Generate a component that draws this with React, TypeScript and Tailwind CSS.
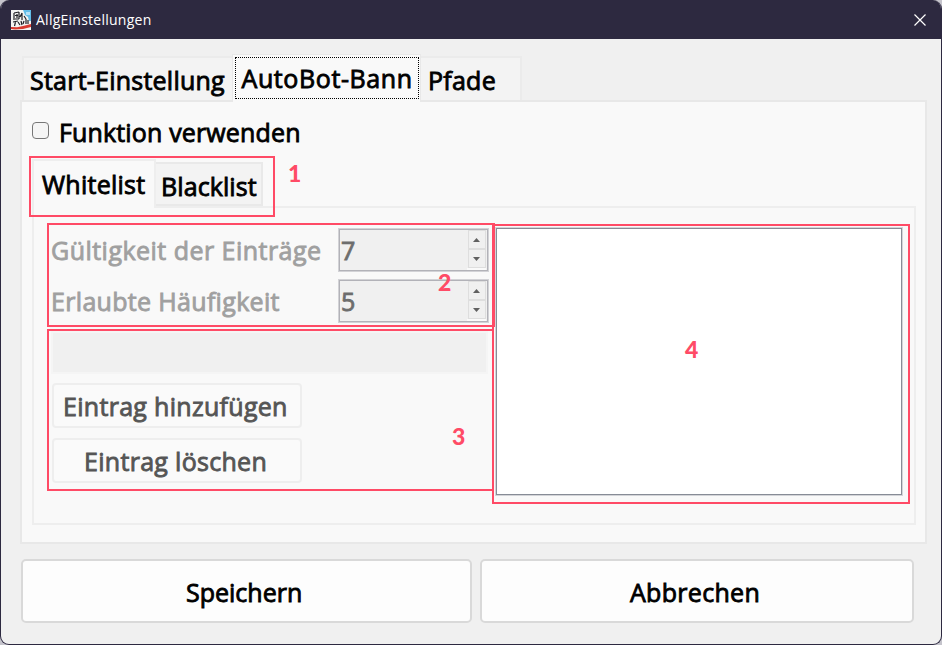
import React from "react";

type LabelProps = { children: React.ReactNode; className?: string };

function Label({ children, className = "" }: LabelProps) {
  return (
    <span className={`block h-9 shrink-0 whitespace-nowrap text-[25px] leading-9 [-webkit-text-stroke:0.85px_currentColor] ${className}`}>
      {children}
    </span>
  );
}

function AppIcon() {
  return (
    <svg width="20" height="20" viewBox="0 0 20 20" className="ml-[11px] shrink-0">
      <rect width="20" height="20" fill="#f4f4f2" />
      <path d="M12 0h8v11h-2l-1-4-3-2z" fill="#62bde8" />
      <path d="M15 2h4v3h-4z" fill="#b4e1f6" />
      <path d="M3 3l5-1M3 3v7M4 5.500h3M4 9h4M8 2v7M6 4v4M11 3l-2 4M11 3v7M13 6l2 3M2 12l5-1M4.500 12l-1 4M7 12l2 3M10 11l1 4M13 11l-1 3M15 9v5M17 10v4" fill="none" stroke="#202026" strokeWidth="1.2" />
      <path d="M0 17l6 .2L12 16l8-2v3l-8 2-8 .5-4-.5z" fill="#d83a30" />
    </svg>
  );
}

function Arrow({ up = false }: { up?: boolean }) {
  return (
    <div className="flex h-[19px] w-[18px] items-center justify-center border border-[#dedede] bg-[#f0f0f0]">
      <svg width="7" height="4" viewBox="0 0 7 4">
        <path d={up ? "M0 4L3.5 0L7 4z" : "M0 0h7L3.5 4z"} fill="#606060" />
      </svg>
    </div>
  );
}

function SpinBox({ value }: { value: string }) {
  return (
    <div className="flex h-[44px] w-[151px] border border-[#d2d2d6] bg-[#f0f0f0]">
      <div className="flex grow border border-[#b2b2b8]">
        <Label className="mt-[2px] ml-[1px] grow text-[#6d6d6d]">{value}</Label>
        <div className="mr-px flex h-[40px] w-[19px] flex-col items-center border-b-2 border-[#fafafa]">
          <Arrow up />
          <Arrow />
        </div>
      </div>
    </div>
  );
}

export default function App() {
  return (
    <div className="h-[645px] w-[942px] overflow-hidden bg-[#c5c4cc] font-['Open_Sans','Noto_Sans',sans-serif] text-black">
      <div className="relative flex h-full flex-col overflow-hidden rounded-[9px] border border-t-0 border-[#2d2940] bg-[#f0f0f0]">
        <header className="-mx-px flex h-[39px] shrink-0 items-center bg-[#2d2940] text-white">
          <AppIcon />
          <span className="ml-[5px] whitespace-nowrap text-[14px] leading-5 tracking-[0.25px]">AllgEinstellungen</span>
          <svg width="12" height="12" viewBox="0 0 12 12" className="mr-[16px] ml-auto">
            <path d="M0.5 0.5l11 11M11.5 0.5l-11 11" stroke="white" strokeWidth="1.2" />
          </svg>
        </header>

        <nav className="ml-[21px] flex h-[61px] shrink-0 items-end">
          <div className="flex h-[44px] w-[210px] border-2 border-r-0 border-b-0 border-[#ebebeb] bg-[#f3f3f3]">
            <Label className="mt-[4px] ml-[6px] tracking-[0.23px]">Start-Einstellung</Label>
          </div>
          <div className="z-10 -mb-[2px] flex h-[48px] w-[189px] justify-center border border-b-0 border-[#e8e8e8] bg-[#f9f9f9] pt-[2px]">
            <div className="h-[42px] w-[184px] border border-dotted border-black">
              <Label className="mt-[2px] ml-[6px] tracking-[0.6px]">AutoBot-Bann</Label>
            </div>
          </div>
          <div className="flex h-[44px] w-[101px] border-2 border-b-0 border-l-0 border-[#ebebeb] bg-[#f3f3f3]">
            <Label className="mt-[4px] ml-[7px] tracking-[0.25px]">Pfade</Label>
          </div>
        </nav>

        <main className="ml-[19px] h-[444px] w-[907px] shrink-0 border-2 border-[#e8e8e8] bg-[#f9f9f9] pl-[10px]">
          <div className="flex h-[57px] items-center">
            <span className="h-[17px] w-[17px] rounded-[4px] border border-[#777] bg-[#f5f5f5]" />
            <Label className="mt-[2px] ml-[10px] tracking-[0.15px]">Funktion verwenden</Label>
          </div>
          <div className="flex h-[47px] items-end">
            <div className="z-10 -mb-[2px] h-[49px] w-[124px] border-2 border-b-0 border-[#eeeeee] bg-[#f9f9f9]">
              <Label className="mt-[5px] ml-[8px] tracking-[0.25px]">Whitelist</Label>
            </div>
            <div className="h-[44px] w-[107px] border-2 border-l-0 border-[#e9e9e9] bg-[#f3f3f3]">
              <Label className="mt-[4px] ml-[5px] tracking-[0.1px]">Blacklist</Label>
            </div>
          </div>

          <section className="flex h-[319px] w-[884px] border-2 border-[#eeeeee] bg-[#f9f9f9]">
            <div className="ml-[17px] w-[444px] shrink-0 pt-[20px]">
              <div className="flex h-[44px]">
                <Label className="mt-[4px] w-[287px] tracking-[0.47px] text-[#a0a0a0]">Gültigkeit der Einträge</Label>
                <SpinBox value="7" />
              </div>
              <div className="mt-[7px] flex h-[44px]">
                <Label className="mt-[4px] w-[287px] tracking-[0.32px] text-[#a0a0a0]">Erlaubte Häufigkeit</Label>
                <SpinBox value="5" />
              </div>
              <div className="mt-[8px] h-[43px] w-[437px] border-2 border-[#f5f5f5] bg-[#f0f0f0]" />
              <div className="mt-[9px] ml-px flex h-[45px] w-[250px] rounded-[4px] border-2 border-[#eeeeee] bg-[#fafafa] pt-[3px] pl-[9px] text-[#555]">
                <Label className="tracking-[0.3px]">Eintrag hinzufügen</Label>
              </div>
              <div className="mt-[10px] ml-px flex h-[45px] w-[250px] rounded-[4px] border-2 border-[#eeeeee] bg-[#fafafa] pt-[3px] pl-[30px] text-[#555]">
                <Label className="tracking-[0.3px]">Eintrag löschen</Label>
              </div>
            </div>
            <div className="mt-[19px] h-[269px] w-[408px] shrink-0 border border-[#d3d4d8] bg-white">
              <div className="h-full border border-[#878c96]" />
            </div>
          </section>
        </main>

        <footer className="mt-[15px] ml-[20px] flex gap-[8px]">
          <button className="flex h-[64px] w-[451px] rounded-[5px] border-2 border-[#d9d9d9] bg-[#fdfdfd] pt-[13px] pl-[163px]">
            <Label>Speichern</Label>
          </button>
          <button className="flex h-[64px] w-[434px] rounded-[5px] border-2 border-[#d9d9d9] bg-[#fdfdfd] pt-[13px] pl-[148px]">
            <Label className="tracking-[0.3px]">Abbrechen</Label>
          </button>
        </footer>

        <div className="pointer-events-none absolute inset-0 z-20 font-[Lato] text-[23px] leading-[30px] font-black text-[#ff4b66]">
          <div className="absolute top-[156px] left-[28px] h-[61px] w-[246px] border-2 border-[#ff4b66]" />
          <div className="absolute top-[223px] left-[46px] h-[104px] w-[448px] border-2 border-[#ff4b66]" />
          <div className="absolute top-[329px] left-[46px] h-[162px] w-[447px] border-2 border-[#ff4b66]" />
          <div className="absolute top-[224px] left-[491px] h-[280px] w-[418px] border-2 border-[#ff4b66]" />
          <span className="absolute top-[158px] left-[287px]">1</span>
          <span className="absolute top-[267px] left-[437px]">2</span>
          <span className="absolute top-[421px] left-[451px]">3</span>
          <span className="absolute top-[334px] left-[684px]">4</span>
        </div>
      </div>
    </div>
  );
}
